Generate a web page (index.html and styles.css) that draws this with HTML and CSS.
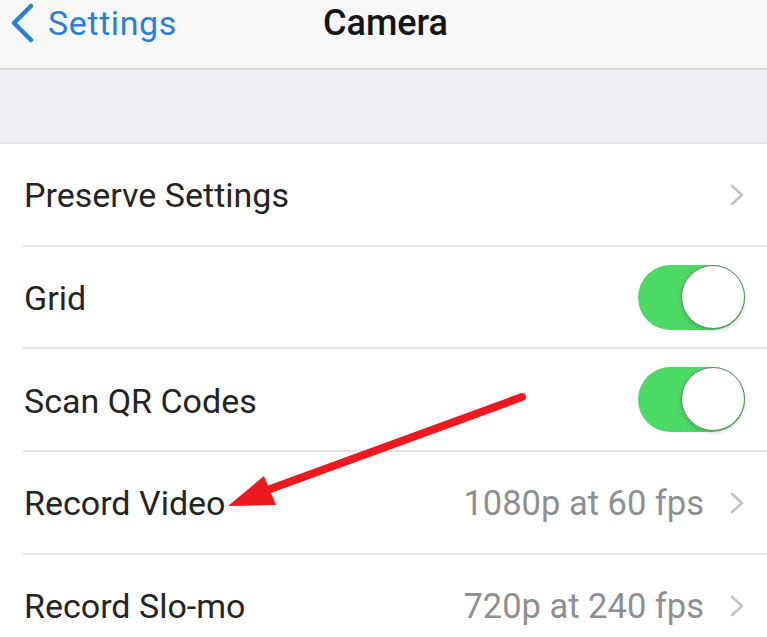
FILE: index.html
```html
<html>

<head>
	<title>
		Camera
	</title>

	<link rel="stylesheet" href="styles.css">
</head>

<body>
	<div class="nav">
		<div class="back">
			<svg class="back-icon" width="26" height="42" viewBox="0 0 26 42">
				<path d="M22 4 L5 21 L22 38" fill="none" stroke="#2c7fd3" stroke-width="4.5" stroke-linecap="round" stroke-linejoin="round" />
			</svg>
			<span>Settings</span>
		</div>
		<div class="title">Camera</div>
		<div></div>
	</div>
	<div class="band"></div>
	<div class="list">
		<div class="row">
			<div class="label">Preserve Settings</div>
			<div class="detail">
				<svg class="chevron" width="16" height="24" viewBox="0 0 16 24">
					<path d="M3 3 L13 12 L3 21" fill="none" stroke="#c4c4c8" stroke-width="2.6" stroke-linecap="round" stroke-linejoin="round" />
				</svg>
			</div>
		</div>
		<div class="row">
			<div class="label">Grid</div>
			<div class="switch"><div class="knob"></div></div>
		</div>
		<div class="row">
			<div class="label">Scan QR Codes</div>
			<div class="switch"><div class="knob"></div></div>
		</div>
		<div class="row">
			<div class="label">Record Video</div>
			<div class="detail">
				<span class="value">1080p at 60 fps</span>
				<svg class="chevron" width="16" height="24" viewBox="0 0 16 24">
					<path d="M3 3 L13 12 L3 21" fill="none" stroke="#c4c4c8" stroke-width="2.6" stroke-linecap="round" stroke-linejoin="round" />
				</svg>
			</div>
		</div>
		<div class="row">
			<div class="label">Record Slo-mo</div>
			<div class="detail">
				<span class="value">720p at 240 fps</span>
				<svg class="chevron" width="16" height="24" viewBox="0 0 16 24">
					<path d="M3 3 L13 12 L3 21" fill="none" stroke="#c4c4c8" stroke-width="2.6" stroke-linecap="round" stroke-linejoin="round" />
				</svg>
			</div>
		</div>
	</div>

	<svg class="arrow" width="767" height="637" viewBox="0 0 767 637">
		<line x1="522" y1="397" x2="262" y2="492" stroke="#ec1a1f" stroke-width="8" stroke-linecap="round" />
		<polygon points="228,506 264,476 276,505" fill="#ec1a1f" />
	</svg>
</body>

</html>
```

FILE: styles.css
```css
html,
body {
	margin: 0px;
	padding: 0px;
	width: 100%;
	height: 100%;
	overflow: hidden;
	background-color: #fff;
	font-family: Roboto, "Liberation Sans", sans-serif;
	color: #242424;
}

.nav {
	display: grid;
	grid-template-columns: 1fr auto 1fr;
	align-items: center;
	height: 68px;
	background-color: #f7f7f7;
	border-bottom: 2px solid #d9d9db;
}

.back {
	display: flex;
	align-items: center;
	gap: 13px;
	padding-left: 9px;
	padding-bottom: 22px;
	font-size: 34px;
	letter-spacing: 0.6px;
	color: #2c7fd3;
}

.title {
	padding-bottom: 22px;
	padding-left: 4px;
	font-size: 36px;
	font-weight: 500;
	color: #151515;
}

.band {
	height: 73px;
	background-color: #efeff3;
	border-bottom: 1px solid #e2e2e4;
}

.row {
	display: flex;
	align-items: center;
	justify-content: space-between;
	height: 100.7px;
	margin-left: 23px;
	padding-left: 1px;
	padding-right: 22px;
	border-bottom: 2px solid #e4e4e6;
}

.row:last-child {
	border-bottom: none;
}

.label {
	padding-top: 2px;
	font-size: 34px;
}

.detail {
	display: flex;
	align-items: center;
	gap: 25px;
	padding-top: 2px;
}

.value {
	font-size: 34.5px;
	color: #8f8f93;
}

.chevron {
	display: block;
}

.switch {
	position: relative;
	width: 107px;
	height: 65px;
	border-radius: 33px;
	background-color: #4cd964;
}

.knob {
	position: absolute;
	top: 0px;
	right: 0px;
	width: 62px;
	height: 62px;
	border-radius: 100%;
	border: 1.5px solid #6f8072;
	background-color: #fff;
	box-shadow: 0px 2px 4px rgba(0, 0, 0, 0.15);
}

.arrow {
	position: absolute;
	left: 0px;
	top: 0px;
	pointer-events: none;
}
```
